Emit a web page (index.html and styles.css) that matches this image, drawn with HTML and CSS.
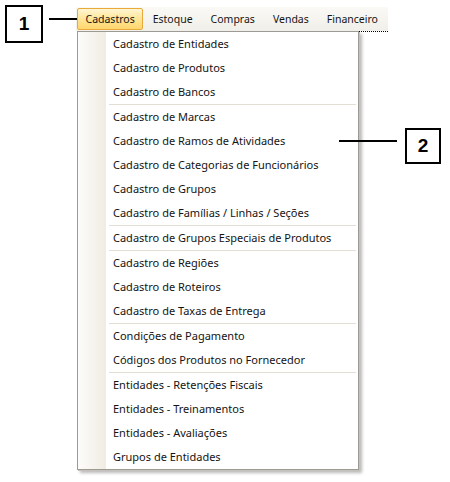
FILE: index.html
```html
<!DOCTYPE html>
<html lang="pt">
<head>
<meta charset="utf-8">
<title>Menu Cadastros</title>
<link rel="stylesheet" href="styles.css">
</head>
<body>
<div class="page">
  <div class="callout callout-1">1</div>
  <div class="leader leader-1"></div>
  <div class="callout callout-2">2</div>
  <div class="leader leader-2"></div>
  <div class="focus-dots"></div>

  <nav class="menubar">
    <span class="menu-item active">Cadastros</span>
    <span class="menu-item">Estoque</span>
    <span class="menu-item">Compras</span>
    <span class="menu-item">Vendas</span>
    <span class="menu-item">Financeiro</span>
  </nav>

  <div class="dropdown">
    <div class="entry">Cadastro de Entidades</div>
    <div class="entry">Cadastro de Produtos</div>
    <div class="entry">Cadastro de Bancos</div>
    <div class="sep"></div>
    <div class="entry">Cadastro de Marcas</div>
    <div class="entry">Cadastro de Ramos de Atividades</div>
    <div class="entry">Cadastro de Categorias de Funcionários</div>
    <div class="entry">Cadastro de Grupos</div>
    <div class="entry">Cadastro de Famílias / Linhas / Seções</div>
    <div class="sep"></div>
    <div class="entry">Cadastro de Grupos Especiais de Produtos</div>
    <div class="sep"></div>
    <div class="entry">Cadastro de Regiões</div>
    <div class="entry">Cadastro de Roteiros</div>
    <div class="entry">Cadastro de Taxas de Entrega</div>
    <div class="sep"></div>
    <div class="entry">Condições de Pagamento</div>
    <div class="entry">Códigos dos Produtos no Fornecedor</div>
    <div class="sep"></div>
    <div class="entry">Entidades - Retenções Fiscais</div>
    <div class="entry">Entidades - Treinamentos</div>
    <div class="entry">Entidades - Avaliações</div>
    <div class="entry">Grupos de Entidades</div>
  </div>
</div>
</body>
</html>
```

FILE: styles.css
```css
html, body {
  margin: 0;
  padding: 0;
  background: #ffffff;
}

.page {
  position: relative;
  width: 450px;
  height: 482px;
  box-sizing: border-box;
  padding: 7px 0 0 76px;
  font-family: "Noto Sans", "Open Sans", sans-serif;
  font-size: 11px;
  color: #141414;
  overflow: hidden;
}

/* annotation callouts */
.callout {
  position: absolute;
  box-sizing: border-box;
  border: 2px solid #000;
  background: #fff;
  display: flex;
  align-items: center;
  justify-content: center;
  font-family: "Liberation Sans", Arial, sans-serif;
  font-weight: bold;
  font-size: 19px;
  color: #000;
}
.callout-1 {
  left: 5px;
  top: 5px;
  width: 38px;
  height: 38px;
}
.callout-2 {
  left: 405px;
  top: 128px;
  width: 36px;
  height: 36px;
}
.leader {
  position: absolute;
  height: 2px;
  background: #000;
}
.leader-1 {
  left: 49px;
  top: 18px;
  width: 28px;
}
.leader-2 {
  left: 339px;
  top: 140px;
  width: 58px;
}

.focus-dots {
  position: absolute;
  left: 359px;
  top: 31px;
  width: 29px;
  border-top: 1px dotted #000;
}

/* menu bar */
.menubar {
  display: flex;
  gap: 1px;
  width: 312px;
  height: 24px;
  box-sizing: border-box;
  padding: 1px 0 1px 1px;
  background: linear-gradient(#faf9f6, #f1efe9);
  font-size: 10.5px;
}
.menu-item {
  display: flex;
  align-items: center;
  height: 22px;
  box-sizing: border-box;
  padding: 0 7.5px;
  border: 1px solid transparent;
  white-space: nowrap;
}
.menu-item.active {
  border-color: #eaa93c;
  border-radius: 2px;
  background: linear-gradient(#fff6d2 0%, #ffe596 50%, #ffd66e 100%);
}

/* dropdown */
.dropdown {
  margin-left: 1px;
  width: 282px;
  box-sizing: border-box;
  border: 1px solid #9d9a93;
  background:
    linear-gradient(to right, #fdfcfa 0, #f0ece2 28px, #ffffff 28px);
  box-shadow: 1px 1px 0 #c4c1ba, 3px 3px 3px rgba(0, 0, 0, 0.28);
}
.entry {
  height: 24px;
  line-height: 24px;
  padding-left: 35px;
  white-space: nowrap;
}
.sep {
  height: 1px;
  margin: 0 2px 0 31px;
  background: #e3dfd4;
}
```
